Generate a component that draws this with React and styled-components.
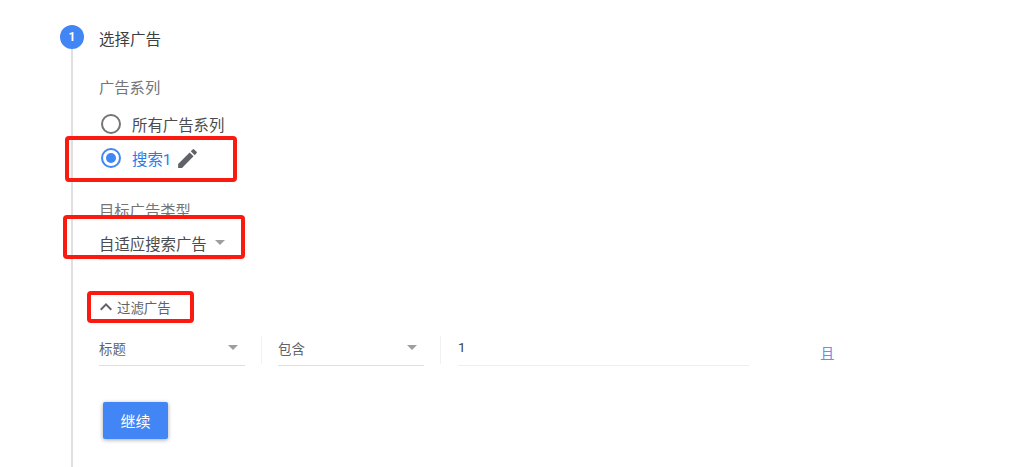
import React from 'react'
import styled, { createGlobalStyle } from 'styled-components'
import { MdEdit, MdExpandLess } from 'react-icons/md'

const GlobalStyle = createGlobalStyle`
  html, body {
    margin: 0;
    background: #fff;
  }
  body {
    font-family: Roboto, "Noto Sans CJK SC", sans-serif;
  }
`

const Page = styled.div`
  position: relative;
  width: 1021px;
  height: 467px;
  overflow: hidden;
  display: flex;
  padding: 25px 0 0 60px;
  box-sizing: border-box;
`

const Rail = styled.div`
  width: 24px;
  margin-right: 15px;
  flex-shrink: 0;
  display: flex;
  flex-direction: column;
  align-items: center;
`

const StepBadge = styled.div`
  width: 24px;
  height: 24px;
  border-radius: 50%;
  background: #4285f4;
  color: #fff;
  font-size: 12px;
  font-weight: 700;
  display: flex;
  align-items: center;
  justify-content: center;
  flex-shrink: 0;
`

const RailLine = styled.div`
  width: 2px;
  flex: 1;
  background: #e0e0e0;
`

const Content = styled.div`
  display: flex;
  flex-direction: column;
  flex: 1;
`

const StepTitle = styled.div`
  font-size: 15.5px;
  line-height: 28px;
  margin-top: 1px;
  color: #3c4043;
`

const SectionLabel = styled.div`
  font-size: 15.3px;
  line-height: 20px;
  color: #757575;
  margin-top: ${p => p.$top}px;
`

const RadioList = styled.div`
  display: flex;
  flex-direction: column;
  gap: 10px;
  margin-top: 14px;
`

const RadioRow = styled.label`
  display: flex;
  align-items: center;
  height: 24px;
  padding-left: 2px;
`

const RadioCircle = styled.span`
  width: 20px;
  height: 20px;
  box-sizing: border-box;
  border-radius: 50%;
  border: 2px solid ${p => (p.$checked ? '#4285f4' : '#757575')};
  display: flex;
  align-items: center;
  justify-content: center;
  margin-right: 11px;

  &::after {
    content: '';
    display: ${p => (p.$checked ? 'block' : 'none')};
    width: 10px;
    height: 10px;
    border-radius: 50%;
    background: #4285f4;
  }
`

const RadioText = styled.span`
  font-size: 15.4px;
  color: ${p => (p.$checked ? '#2a7de9' : '#4a4d50')};
`

const EditIcon = styled(MdEdit)`
  color: #5f6368;
  font-size: 25px;
  margin-left: 4px;
`

const TypeSelect = styled.div`
  display: flex;
  align-items: center;
  width: 132px;
  height: 33px;
  margin-top: 5px;
  border-bottom: 1px solid #e0e0e0;
  box-sizing: content-box;
`

const TypeValue = styled.span`
  font-size: 15.4px;
  color: #4a4d50;
`

const Caret = styled.span`
  width: 0;
  height: 0;
  border-left: 5.5px solid transparent;
  border-right: 5.5px solid transparent;
  border-top: 5px solid #9e9e9e;
  margin-left: ${p => p.$left || 0}px;
  flex-shrink: 0;
`

const FilterToggle = styled.div`
  display: flex;
  align-items: center;
  height: 20px;
  margin-top: 37px;
  font-size: 13.4px;
  color: #5f6368;
`

const ToggleIcon = styled(MdExpandLess)`
  font-size: 24px;
  margin-left: -5px;
  margin-right: -1px;
  color: #5f6368;
`

const FilterRow = styled.div`
  display: flex;
  align-items: stretch;
  height: 30px;
  margin-top: 19px;
`

const FilterSelect = styled.div`
  width: 146px;
  display: flex;
  align-items: center;
  justify-content: space-between;
  padding: 0 7px 6px 0;
  box-sizing: border-box;
  border-bottom: 1px solid #e0e0e0;
  font-size: 13.4px;
  color: #5f6368;
`

const FilterDivider = styled.div`
  width: 1px;
  height: 28px;
  background: #f1f1f1;
  margin: 0 16px;
`

const FilterInput = styled.div`
  width: 291px;
  margin-left: 1px;
  padding-bottom: 6px;
  display: flex;
  align-items: center;
  box-sizing: border-box;
  border-bottom: 1px solid #eeeeee;
  font-size: 13.4px;
  color: #3c4043;
`

const AndLink = styled.a`
  align-self: flex-end;
  margin-left: 71px;
  margin-bottom: 2px;
  font-size: 14.5px;
  line-height: 18px;
  color: #5a95f5;
`

const ContinueButton = styled.button`
  width: 65px;
  height: 37px;
  margin: 36px 0 0 4px;
  border: 0;
  border-radius: 2px;
  background: #4285f4;
  color: #fff;
  font-family: inherit;
  font-size: 15px;
  box-shadow: 0 1px 4px rgba(0, 0, 0, 0.35);
`

// red boxes drawn on top of the screenshot
const Highlight = styled.div`
  position: absolute;
  left: ${p => p.$left}px;
  top: ${p => p.$top}px;
  width: ${p => p.$width}px;
  height: ${p => p.$height}px;
  box-sizing: border-box;
  border: 4px solid #fb1a10;
  border-radius: 4px;
`

export default function App() {
  return (
    <>
      <GlobalStyle />
      <Page>
        <Rail>
          <StepBadge>1</StepBadge>
          <RailLine />
        </Rail>
        <Content>
          <StepTitle>选择广告</StepTitle>
          <SectionLabel $top={24}>广告系列</SectionLabel>
          <RadioList>
            <RadioRow>
              <RadioCircle />
              <RadioText>所有广告系列</RadioText>
            </RadioRow>
            <RadioRow>
              <RadioCircle $checked />
              <RadioText $checked>搜索1</RadioText>
              <EditIcon />
            </RadioRow>
          </RadioList>
          <SectionLabel $top={31}>目标广告类型</SectionLabel>
          <TypeSelect>
            <TypeValue>自适应搜索广告</TypeValue>
            <Caret $left={8} />
          </TypeSelect>
          <FilterToggle>
            <ToggleIcon />
            过滤广告
          </FilterToggle>
          <FilterRow>
            <FilterSelect>
              标题
              <Caret />
            </FilterSelect>
            <FilterDivider />
            <FilterSelect>
              包含
              <Caret />
            </FilterSelect>
            <FilterDivider />
            <FilterInput>1</FilterInput>
            <AndLink>且</AndLink>
          </FilterRow>
          <ContinueButton>继续</ContinueButton>
        </Content>
        <Highlight $left={65} $top={136} $width={172} $height={46} />
        <Highlight $left={63} $top={215} $width={182} $height={44} />
        <Highlight $left={87} $top={291} $width={107} $height={32} />
      </Page>
    </>
  )
}
